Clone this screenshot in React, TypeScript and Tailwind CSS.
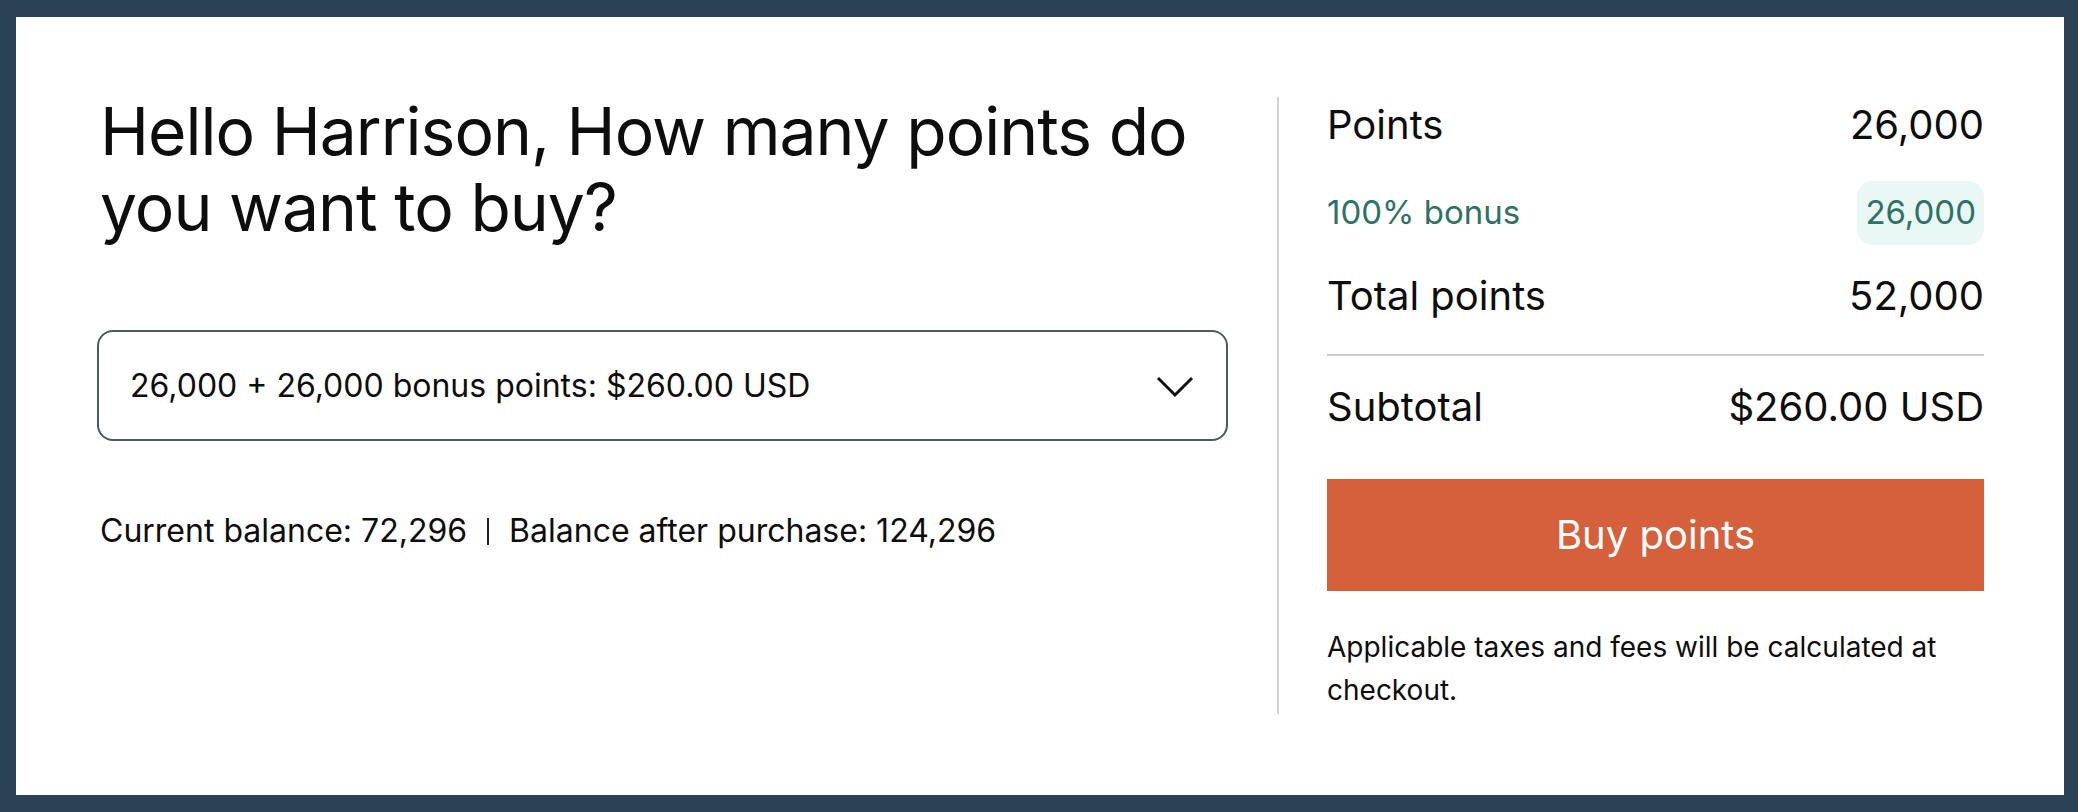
const font = { fontFamily: 'Inter, "Noto Sans", sans-serif' };

function SummaryRow({ label, value }: { label: string; value: string }) {
  return (
    <div className="flex items-center justify-between text-[40px] leading-[48px] text-[#0d0d0d]">
      <span>{label}</span>
      <span>{value}</span>
    </div>
  );
}

export default function App() {
  return (
    <div
      className="h-[812px] w-full bg-[#2a4156] pt-[17px] pl-[16px] pr-[14px] pb-[17px]"
      style={font}
    >
      <div className="flex h-full bg-white pt-[80px]">
        {/* Left column */}
        <div className="w-[1261px] shrink-0 pl-[81px] pr-[49px]">
          <h1 className="mt-[-4px] pl-[3px] text-[66px] leading-[76px] font-normal tracking-[-0.015em] text-[#0d0d0d]">
            Hello Harrison, How many points do you want to buy?
          </h1>

          <button className="mt-[85px] flex h-[111px] w-full items-center justify-between rounded-[16px] border-2 border-[#4b5a65] pl-[31px] pr-[31px] text-left text-[32px] text-[#0d0d0d]">
            <span>26,000 + 26,000 bonus points: $260.00 USD</span>
            <svg width="40" height="24" viewBox="0 0 40 24" fill="none" className="mt-[2px]">
              <path d="M3 3L20 20L37 3" stroke="#111" strokeWidth="3" />
            </svg>
          </button>

          <p className="mt-[66px] flex items-center pl-[3px] text-[32px] text-[#0d0d0d]">
            <span>Current balance: 72,296</span>
            <span className="mx-[20px] h-[27px] w-[2px] bg-[#222]" />
            <span>Balance after purchase: 124,296</span>
          </p>
        </div>

        {/* Right column */}
        <div className="flex h-[617px] w-[707px] shrink-0 flex-col border-l-2 border-[#cfd1d4] pl-[48px] pt-[4px]">
          <SummaryRow label="Points" value="26,000" />

          <div className="mt-[32px] flex items-center justify-between text-[33px] text-[#2e7266]">
            <span>100% bonus</span>
            <span className="flex h-[64px] items-center rounded-[16px] bg-[#e9f7f5] px-[8px]">26,000</span>
          </div>

          <div className="mt-[27px]">
            <SummaryRow label="Total points" value="52,000" />
          </div>

          <div className="mt-[34px] h-[2px] bg-[#c8cacc]" />

          <div className="mt-[27px]">
            <SummaryRow label="Subtotal" value="$260.00 USD" />
          </div>

          <button className="mt-[48px] flex h-[112px] w-full items-center justify-center bg-[#d65f3c] text-[40px] text-white">
            Buy points
          </button>

          <p className="mt-[35px] text-[28px] leading-[43px] text-[#0d0d0d]">
            Applicable taxes and fees will be calculated at checkout.
          </p>
        </div>
      </div>
    </div>
  );
}
